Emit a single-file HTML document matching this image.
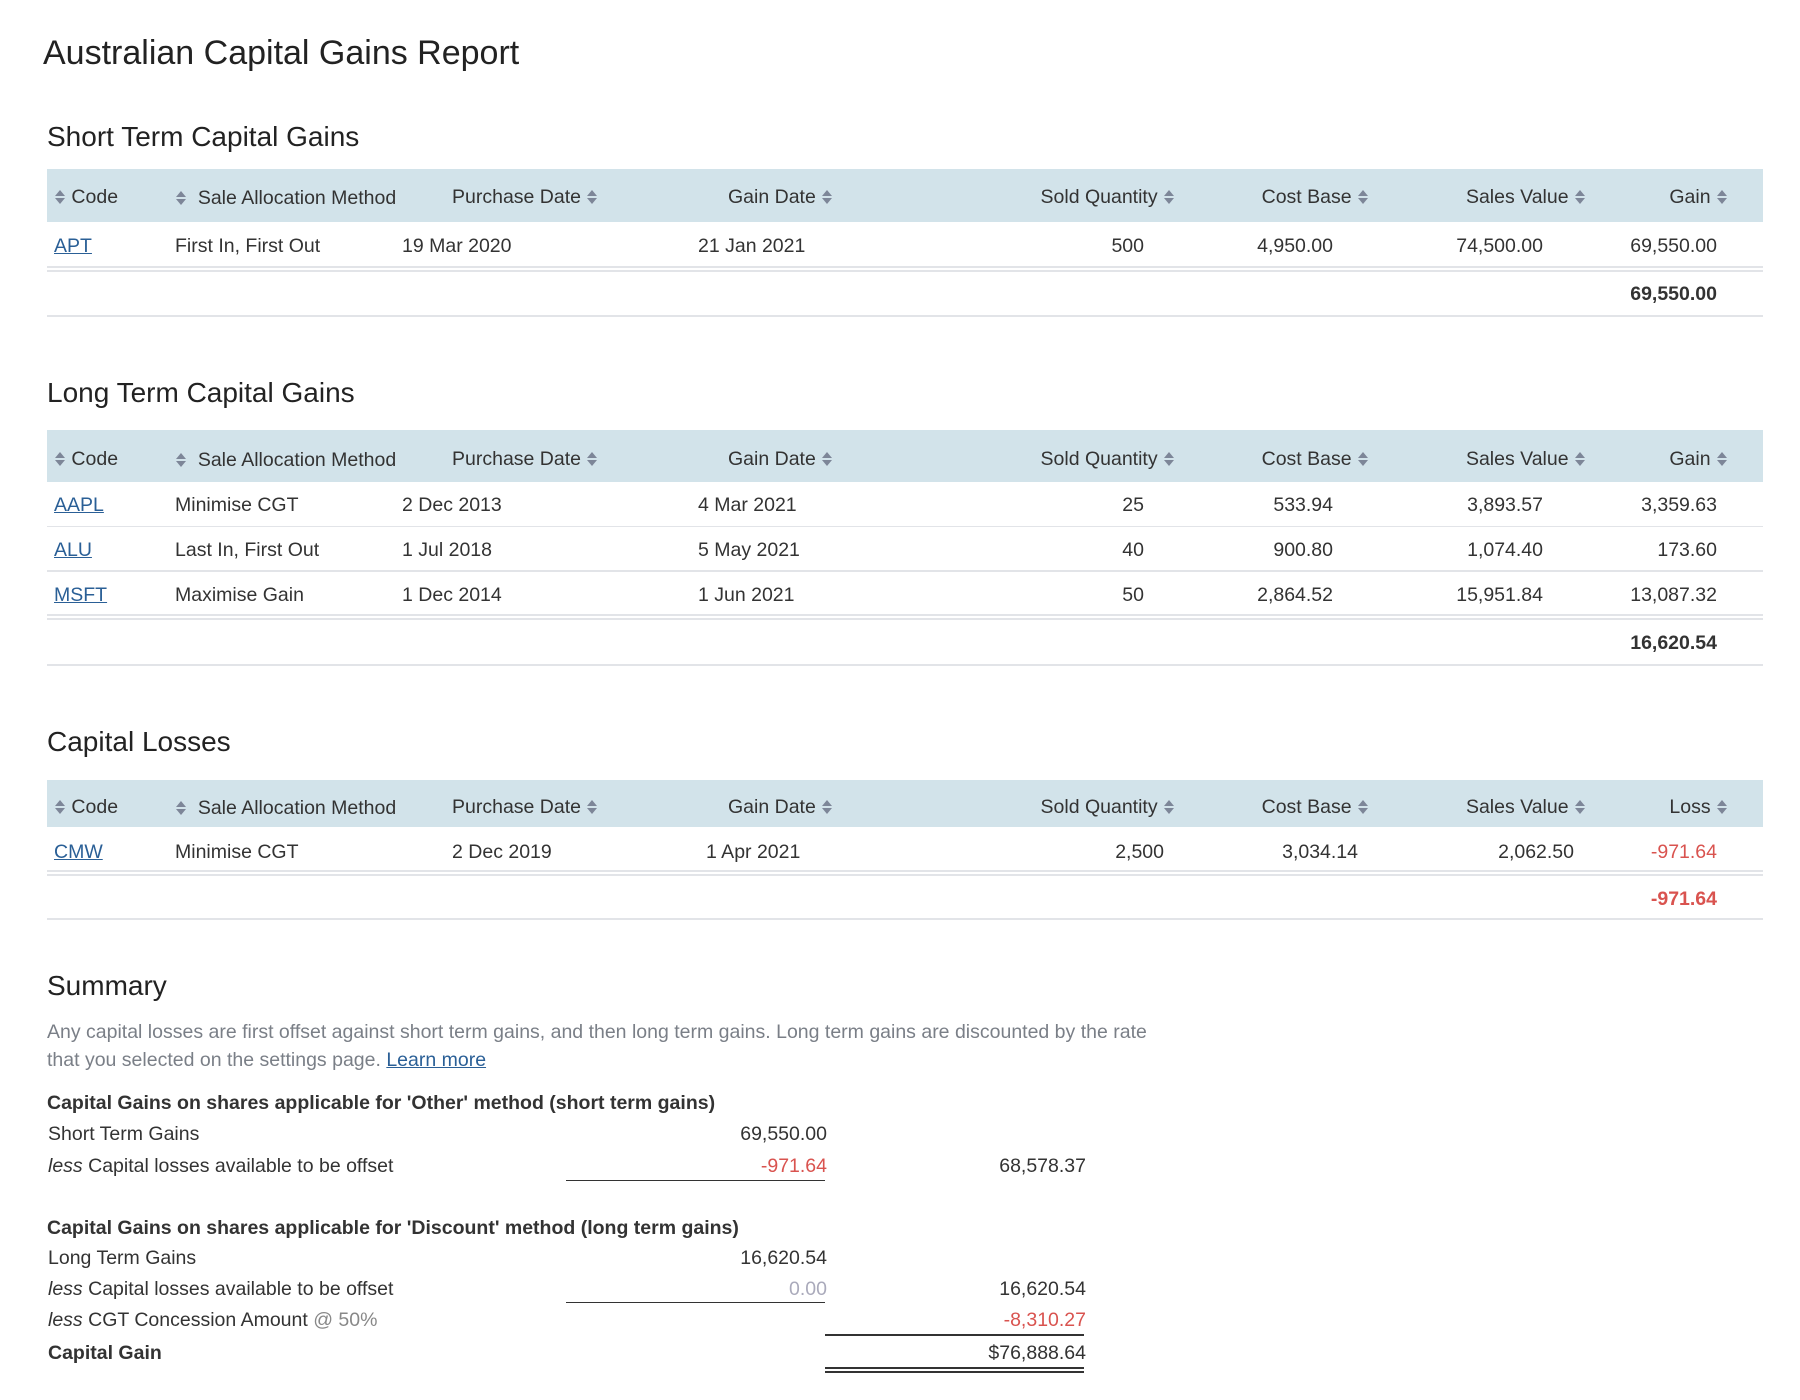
<!DOCTYPE html>
<html><head><meta charset="utf-8"><style>
body{margin:0;width:1800px;height:1400px;background:#fff;font-family:"Liberation Sans",Arial,sans-serif;color:#333;position:relative;overflow:hidden}
.t{position:absolute;line-height:24px;height:24px;white-space:nowrap;font-size:19.5px;transform:translateY(-12px)}
.r{text-align:right}
.band{position:absolute;left:47px;width:1716px;background:#d2e3ea}
.ln{position:absolute;left:47px;width:1716px;height:2px;background:#e2e4e8}
a{color:#2a5f96;text-decoration:underline}
.red{color:#d9534f}
.b{font-weight:bold}
h1,h2{margin:0;font-weight:normal;position:absolute;white-space:nowrap;color:#222}
h1{font-size:34px;left:43px;top:34px}
h2{font-size:28px;left:47px}
.s{display:inline-block;width:12px;height:16px;vertical-align:-2px}
.p{position:absolute;left:47px;font-size:19.5px;color:#7a7f87;white-space:nowrap;line-height:24px;transform:translateY(-12px)}
.hr{position:absolute;background:#333}
</style></head><body>
<svg width="0" height="0" style="position:absolute"><defs><g id="si"><path d="M6 1 L11 7 L1 7 Z M1 9 L11 9 L6 15 Z" fill="#7d8698"/></g></defs></svg>

<h1>Australian Capital Gains Report</h1>

<h2 style="top:121px">Short Term Capital Gains</h2>
<div class="band" style="top:169px;height:53px"></div>
<div class="t" style="left:54px;top:197px"><svg class="s"><use href="#si"/></svg> Code</div>
<div class="t" style="left:175px;top:198px"><svg class="s"><use href="#si"/></svg>&nbsp; Sale Allocation Method</div>
<div class="t" style="left:452px;top:197px">Purchase Date <svg class="s"><use href="#si"/></svg></div>
<div class="t" style="left:728px;top:197px">Gain Date <svg class="s"><use href="#si"/></svg></div>
<div class="t r" style="right:625px;top:197px">Sold Quantity <svg class="s"><use href="#si"/></svg></div>
<div class="t r" style="right:431px;top:197px">Cost Base <svg class="s"><use href="#si"/></svg></div>
<div class="t r" style="right:214px;top:197px">Sales Value <svg class="s"><use href="#si"/></svg></div>
<div class="t r" style="right:72px;top:197px">Gain <svg class="s"><use href="#si"/></svg></div>
<div class="t" style="left:54px;top:246px"><a>APT</a></div>
<div class="t" style="left:175px;top:246px">First In, First Out</div>
<div class="t" style="left:402px;top:246px">19 Mar 2020</div>
<div class="t" style="left:698px;top:246px">21 Jan 2021</div>
<div class="t r" style="right:656px;top:246px">500</div>
<div class="t r" style="right:467px;top:246px">4,950.00</div>
<div class="t r" style="right:257px;top:246px">74,500.00</div>
<div class="t r" style="right:83px;top:246px">69,550.00</div>
<div class="ln" style="top:266px"></div><div class="ln" style="top:270px"></div>
<div class="t r b" style="right:83px;top:294px">69,550.00</div>
<div class="ln" style="top:315px"></div>

<h2 style="top:377px">Long Term Capital Gains</h2>
<div class="band" style="top:430px;height:52px"></div>
<div class="t" style="left:54px;top:459px"><svg class="s"><use href="#si"/></svg> Code</div>
<div class="t" style="left:175px;top:460px"><svg class="s"><use href="#si"/></svg>&nbsp; Sale Allocation Method</div>
<div class="t" style="left:452px;top:459px">Purchase Date <svg class="s"><use href="#si"/></svg></div>
<div class="t" style="left:728px;top:459px">Gain Date <svg class="s"><use href="#si"/></svg></div>
<div class="t r" style="right:625px;top:459px">Sold Quantity <svg class="s"><use href="#si"/></svg></div>
<div class="t r" style="right:431px;top:459px">Cost Base <svg class="s"><use href="#si"/></svg></div>
<div class="t r" style="right:214px;top:459px">Sales Value <svg class="s"><use href="#si"/></svg></div>
<div class="t r" style="right:72px;top:459px">Gain <svg class="s"><use href="#si"/></svg></div>

<div class="t" style="left:54px;top:505px"><a>AAPL</a></div>
<div class="t" style="left:175px;top:505px">Minimise CGT</div>
<div class="t" style="left:402px;top:505px">2 Dec 2013</div>
<div class="t" style="left:698px;top:505px">4 Mar 2021</div>
<div class="t r" style="right:656px;top:505px">25</div>
<div class="t r" style="right:467px;top:505px">533.94</div>
<div class="t r" style="right:257px;top:505px">3,893.57</div>
<div class="t r" style="right:83px;top:505px">3,359.63</div>
<div class="ln" style="top:526px;height:1px"></div>
<div class="t" style="left:54px;top:550px"><a>ALU</a></div>
<div class="t" style="left:175px;top:550px">Last In, First Out</div>
<div class="t" style="left:402px;top:550px">1 Jul 2018</div>
<div class="t" style="left:698px;top:550px">5 May 2021</div>
<div class="t r" style="right:656px;top:550px">40</div>
<div class="t r" style="right:467px;top:550px">900.80</div>
<div class="t r" style="right:257px;top:550px">1,074.40</div>
<div class="t r" style="right:83px;top:550px">173.60</div>
<div class="ln" style="top:570px"></div>
<div class="t" style="left:54px;top:595px"><a>MSFT</a></div>
<div class="t" style="left:175px;top:595px">Maximise Gain</div>
<div class="t" style="left:402px;top:595px">1 Dec 2014</div>
<div class="t" style="left:698px;top:595px">1 Jun 2021</div>
<div class="t r" style="right:656px;top:595px">50</div>
<div class="t r" style="right:467px;top:595px">2,864.52</div>
<div class="t r" style="right:257px;top:595px">15,951.84</div>
<div class="t r" style="right:83px;top:595px">13,087.32</div>
<div class="ln" style="top:614px"></div><div class="ln" style="top:618px"></div>
<div class="t r b" style="right:83px;top:643px">16,620.54</div>
<div class="ln" style="top:664px"></div>

<h2 style="top:726px">Capital Losses</h2>
<div class="band" style="top:780px;height:47px"></div>
<div class="t" style="left:54px;top:807px"><svg class="s"><use href="#si"/></svg> Code</div>
<div class="t" style="left:175px;top:808px"><svg class="s"><use href="#si"/></svg>&nbsp; Sale Allocation Method</div>
<div class="t" style="left:452px;top:807px">Purchase Date <svg class="s"><use href="#si"/></svg></div>
<div class="t" style="left:728px;top:807px">Gain Date <svg class="s"><use href="#si"/></svg></div>
<div class="t r" style="right:625px;top:807px">Sold Quantity <svg class="s"><use href="#si"/></svg></div>
<div class="t r" style="right:431px;top:807px">Cost Base <svg class="s"><use href="#si"/></svg></div>
<div class="t r" style="right:214px;top:807px">Sales Value <svg class="s"><use href="#si"/></svg></div>
<div class="t r" style="right:72px;top:807px">Loss <svg class="s"><use href="#si"/></svg></div>
<div class="t" style="left:54px;top:852px"><a>CMW</a></div>
<div class="t" style="left:175px;top:852px">Minimise CGT</div>
<div class="t" style="left:452px;top:852px">2 Dec 2019</div>
<div class="t" style="left:706px;top:852px">1 Apr 2021</div>
<div class="t r" style="right:636px;top:852px">2,500</div>
<div class="t r" style="right:442px;top:852px">3,034.14</div>
<div class="t r" style="right:226px;top:852px">2,062.50</div>
<div class="t r red" style="right:83px;top:852px">-971.64</div>
<div class="ln" style="top:870px"></div><div class="ln" style="top:874px"></div>
<div class="t r b red" style="right:83px;top:899px">-971.64</div>
<div class="ln" style="top:918px"></div>

<h2 style="top:970px">Summary</h2>
<div class="p" style="top:1032px">Any capital losses are first offset against short term gains, and then long term gains. Long term gains are discounted by the rate</div>
<div class="p" style="top:1060px">that you selected on the settings page. <a>Learn more</a></div>

<div class="t b" style="left:47px;top:1103px;font-size:19.5px">Capital Gains on shares applicable for 'Other' method (short term gains)</div>
<div class="t" style="left:48px;top:1134px;font-size:19.5px">Short Term Gains</div>
<div class="t r" style="right:973px;top:1134px;font-size:19.5px">69,550.00</div>
<div class="t" style="left:48px;top:1166px;font-size:19.5px"><i>less</i> Capital losses available to be offset</div>
<div class="t r red" style="right:973px;top:1166px;font-size:19.5px">-971.64</div>
<div class="t r" style="right:714px;top:1166px;font-size:19.5px">68,578.37</div>
<div class="hr" style="left:566px;width:259px;top:1180px;height:1px"></div>

<div class="t b" style="left:47px;top:1228px;font-size:19.5px">Capital Gains on shares applicable for 'Discount' method (long term gains)</div>
<div class="t" style="left:48px;top:1258px;font-size:19.5px">Long Term Gains</div>
<div class="t r" style="right:973px;top:1258px;font-size:19.5px">16,620.54</div>
<div class="t" style="left:48px;top:1289px;font-size:19.5px"><i>less</i> Capital losses available to be offset</div>
<div class="t r" style="right:973px;top:1289px;font-size:19.5px;color:#aab">0.00</div>
<div class="t r" style="right:714px;top:1289px;font-size:19.5px">16,620.54</div>
<div class="hr" style="left:566px;width:259px;top:1302px;height:1px"></div>
<div class="t" style="left:48px;top:1320px;font-size:19.5px"><i>less</i> CGT Concession Amount <span style="color:#888">@ 50%</span></div>
<div class="t r red" style="right:714px;top:1320px;font-size:19.5px">-8,310.27</div>
<div class="hr" style="left:825px;width:259px;top:1334px;height:2px"></div>
<div class="t b" style="left:48px;top:1353px;font-size:19.5px">Capital Gain</div>
<div class="t r" style="right:714px;top:1353px;font-size:19.5px">$76,888.64</div>
<div class="hr" style="left:825px;width:259px;top:1367px;height:2px"></div>
<div class="hr" style="left:825px;width:259px;top:1371px;height:2px"></div>
</body></html>
